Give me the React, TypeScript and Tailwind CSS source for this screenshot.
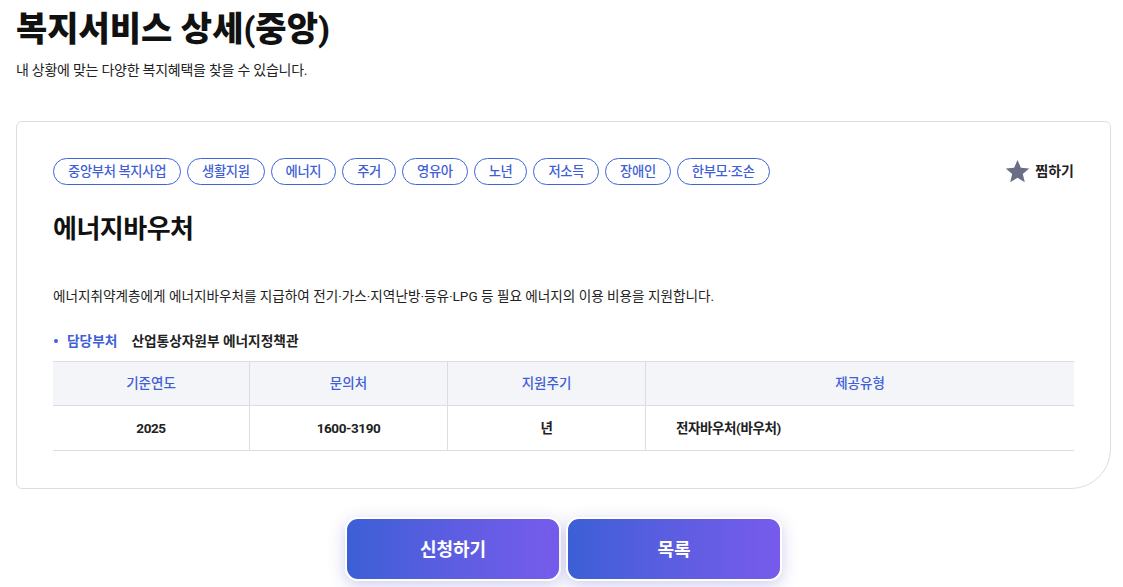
import React from "react";

const tags = [
  "중앙부처 복지사업",
  "생활지원",
  "에너지",
  "주거",
  "영유아",
  "노년",
  "저소득",
  "장애인",
  "한부모·조손",
];

const columns = [
  { label: "기준연도", value: "2025", width: "w-[197px]", align: "text-center" },
  { label: "문의처", value: "1600-3190", width: "w-[198px]", align: "text-center" },
  { label: "지원주기", value: "년", width: "w-[198px]", align: "text-center" },
  { label: "제공유형", value: "전자바우처(바우처)", width: "flex-1", align: "text-left pl-[30px]" },
];

function StarIcon() {
  return (
    <svg width="25" height="25" viewBox="0 0 24 24" className="text-[#6b6d86]">
      <path
        fill="currentColor"
        d="M12 1l3.2 7.4 8 .7-6.1 5.3 1.9 7.9L12 18.1 5 22.3l1.9-7.9L.8 9.1l8-.7z"
      />
    </svg>
  );
}

export default function App() {
  return (
    <div className="min-h-[587px] bg-white font-['Roboto','Noto_Sans_CJK_KR','Noto_Sans',sans-serif] text-[#111]">
      <div className="px-4 pt-[5px]">
        <h1 className="text-[34px] font-extrabold leading-[48px]">
          복지서비스 상세(중앙)
        </h1>
        <p className="mt-[7px] text-[14px] leading-[20px] tracking-[-0.25px] text-[#222]">
          내 상황에 맞는 다양한 복지혜택을 찾을 수 있습니다.
        </p>
      </div>

      <div className="mx-4 mt-[41px] w-[1095px] rounded-[6px] rounded-br-[40px] border border-[#dedede] px-[36px] pt-[36px] pb-[37px]">
        <div className="flex items-start justify-between">
          <div className="flex gap-[6px]">
            {tags.map((t) => (
              <span
                key={t}
                className="flex h-[27px] items-center rounded-full border border-[#3f63d8] px-[14px] text-[13.3px] font-medium tracking-[-0.35px] text-[#3f5fd6]"
              >
                {t}
              </span>
            ))}
          </div>
          <button className="mt-[1px] flex items-center gap-[5px] text-[14px] font-bold text-[#222]">
            <StarIcon />
            찜하기
          </button>
        </div>

        <h2 className="mt-[26px] text-[26px] font-bold leading-[36px] tracking-[-0.5px]">
          에너지바우처
        </h2>

        <p className="mt-[39px] text-[13.6px] leading-[20px] text-[#222]">
          에너지취약계층에게 에너지바우처를 지급하여 전기·가스·지역난방·등유·LPG 등 필요 에너지의 이용 비용을 지원합니다.
        </p>

        <div className="mt-[25px] flex items-center text-[13.7px] font-bold leading-[20px]">
          <span className="mr-[9px] ml-[1px] h-[4px] w-[4px] rounded-full bg-[#3f63d8]" />
          <span className="text-[#3f5fd6]">담당부처</span>
          <span className="ml-[14px] text-[#222]">산업통상자원부 에너지정책관</span>
        </div>

        <div className="mt-[10px] w-[1021px] text-[13.5px]">
          <div className="flex h-[45px] border-y border-[#dcdde2] bg-[#f4f5f9]">
            {columns.map((c, i) => (
              <div
                key={c.label}
                className={`${c.width} flex items-center justify-center font-medium text-[#3f5fd6] ${i < 3 ? "border-r border-[#dcdde2]" : ""}`}
              >
                {c.label}
              </div>
            ))}
          </div>
          <div className="flex h-[45px] border-b border-[#dcdde2]">
            {columns.map((c, i) => (
              <div
                key={c.label}
                className={`${c.width} ${c.align} flex items-center tracking-[-0.4px] ${i < 3 ? "justify-center border-r border-[#dcdde2]" : ""} font-bold text-[#222]`}
              >
                {c.value}
              </div>
            ))}
          </div>
        </div>
      </div>

      <div className="mt-[28px] flex justify-center gap-[5px] pl-[4px]">
        <button className="h-[64px] w-[216px] rounded-[13px] border-[2.5px] border-white bg-gradient-to-r from-[#3b5fd6] to-[#775bec] text-[18px] font-bold text-white shadow-[0_4px_16px_rgba(90,90,200,0.3)]">
          신청하기
        </button>
        <button className="h-[64px] w-[216px] rounded-[13px] border-[2.5px] border-white bg-gradient-to-r from-[#3b5fd6] to-[#775bec] text-[18px] font-bold text-white shadow-[0_4px_16px_rgba(90,90,200,0.3)]">
          목록
        </button>
      </div>
    </div>
  );
}
